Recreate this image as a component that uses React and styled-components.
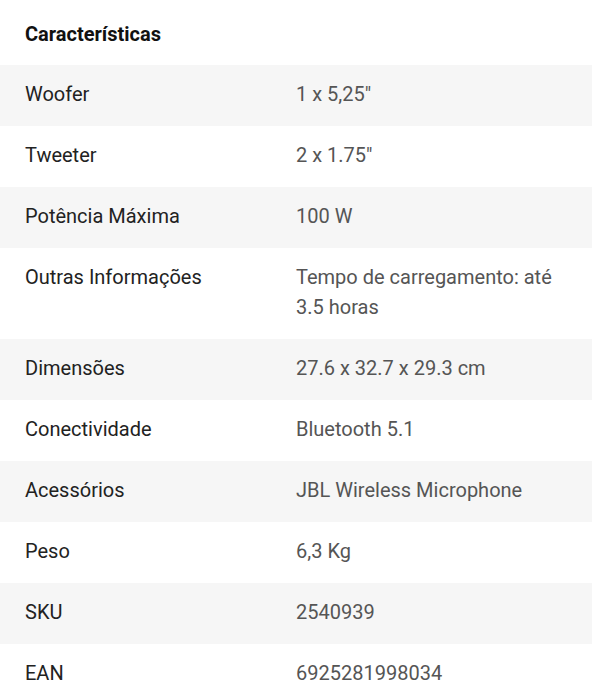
import React from 'react'
import styled, { createGlobalStyle } from 'styled-components'

const GlobalStyle = createGlobalStyle`
  body {
    margin: 0;
    background: #fff;
    font-family: Roboto, 'Liberation Sans', sans-serif;
  }
`

const Section = styled.section`
  width: 592px;
  background: #fff;
`

const Title = styled.h2`
  margin: 0;
  height: 65px;
  display: flex;
  align-items: center;
  padding: 3px 25px 0;
  box-sizing: border-box;
  font-size: 20px;
  font-weight: 700;
  color: #111;
`

const SpecTable = styled.div`
  display: flex;
  flex-direction: column;
`

const Row = styled.div`
  display: grid;
  grid-template-columns: 296px 1fr;
  background: ${props => (props.$shaded ? '#f6f6f6' : '#fff')};
  padding: 14px 0 17px;
  font-size: 20px;
  line-height: 30px;
`

const Label = styled.div`
  padding-left: 25px;
  color: #222;
`

const Value = styled.div`
  padding-right: 25px;
  color: #555;
`

const specs = [
  ['Woofer', '1 x 5,25"'],
  ['Tweeter', '2 x 1.75"'],
  ['Potência Máxima', '100 W'],
  ['Outras Informações', 'Tempo de carregamento: até 3.5 horas'],
  ['Dimensões', '27.6 x 32.7 x 29.3 cm'],
  ['Conectividade', 'Bluetooth 5.1'],
  ['Acessórios', 'JBL Wireless Microphone'],
  ['Peso', '6,3 Kg'],
  ['SKU', '2540939'],
  ['EAN', '6925281998034']
]

export default function App () {
  return (
    <Section>
      <GlobalStyle />
      <Title>Características</Title>
      <SpecTable>
        {specs.map(([label, value], i) => (
          <Row key={label} $shaded={i % 2 === 0}>
            <Label>{label}</Label>
            <Value>{value}</Value>
          </Row>
        ))}
      </SpecTable>
    </Section>
  )
}
